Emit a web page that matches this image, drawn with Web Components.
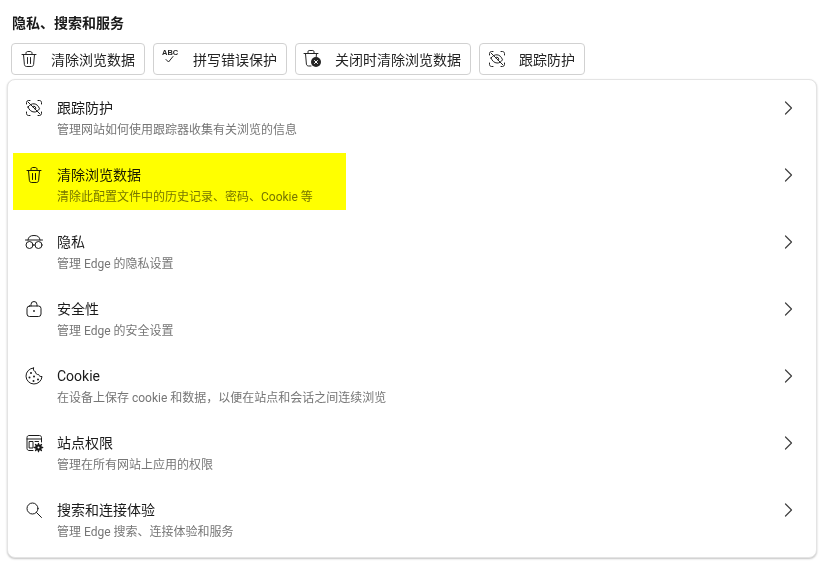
<!DOCTYPE html>
<html lang="zh-CN">
<head>
<meta charset="utf-8">
<title>隐私、搜索和服务</title>
<style>
    html, body { margin: 0; background: #fff; }
    body {
        font-family: Roboto, "Noto Sans CJK SC", sans-serif;
        color: #1a1a1a;
    }
</style>
</head>
<body>
<privacy-page>
    <quick-button icon="trash">清除浏览数据</quick-button>
    <quick-button icon="spell">拼写错误保护</quick-button>
    <quick-button icon="trash-x">关闭时清除浏览数据</quick-button>
    <quick-button icon="track">跟踪防护</quick-button>

    <setting-row slot="rows" icon="track" title="跟踪防护">管理网站如何使用跟踪器收集有关浏览的信息</setting-row>
    <setting-row slot="rows" icon="trash" title="清除浏览数据" marked>清除此配置文件中的历史记录、密码、Cookie 等</setting-row>
    <setting-row slot="rows" icon="glasses" title="隐私">管理 Edge 的隐私设置</setting-row>
    <setting-row slot="rows" icon="lock" title="安全性">管理 Edge 的安全设置</setting-row>
    <setting-row slot="rows" icon="cookie" title="Cookie">在设备上保存 cookie 和数据，以便在站点和会话之间连续浏览</setting-row>
    <setting-row slot="rows" icon="site" title="站点权限">管理在所有网站上应用的权限</setting-row>
    <setting-row slot="rows" icon="search" title="搜索和连接体验">管理 Edge 搜索、连接体验和服务</setting-row>
</privacy-page>

<script>
// icon bodies, all on a 20x20 box
const ICONS = {
    trash: `<path d="M3 5.500h14M7 5.500V4.200c0-1 .7-1.700 1.700-1.700h2.600c1 0 1.700.7 1.700 1.700v1.300M4.500 5.500l.9 10c.1 1.200 1 2 2.200 2h4.800c1.200 0 2.100-.8 2.200-2l.9-10M8.500 8.500v6M11.500 8.500v6"/>`,
    'trash-x': `<path d="M1 4.500h14M5 4.500V2.700c0-.7.5-1.200 1.200-1.200h3.600c.7 0 1.200.5 1.200 1.200v1.800M2.500 4.500l.9 10.500c.1 1.200 1 2 2.200 2h2.400M13.500 4.500l-.3 3.500"/>
        <circle cx="13" cy="13" r="5" fill="currentColor" stroke="none"/>
        <path d="M11.500 11.500l3 3M14.500 11.500l-3 3" stroke="#fff" stroke-width="1"/>`,
    spell: `<text x="1" y="6" font-family="Liberation Sans, sans-serif" font-size="7.500" font-weight="700" fill="currentColor" stroke="none">ABC</text>
        <path d="M5 10.500l2.500 2.500L12 7.500"/>`,
    track: `<path d="M2.500 6v-1.500c0-1.100.9-2 2-2H6M14 2.500h1.500c1.100 0 2 .9 2 2V6M17.500 14v1.500c0 1.100-.9 2-2 2H14M6 17.500H4.500c-1.100 0-2-.9-2-2V14"/>
        <path d="M4 4l12 12"/>
        <path d="M4 9c1.800-2.300 4-3.400 6-3.200 2.500.2 4.500 2 5.500 5-1.500 2.300-3.500 3.400-5.500 3.200-2.800-.2-4.800-2-6-5z"/>
        <path d="M8.600 8.600a2 2 0 0 1 2.800 2.800"/>`,
    glasses: `<path d="M1.500 8h17M4 8c.3-3 2-4.500 6-4.500S15.700 5 16 8"/>
        <circle cx="5.500" cy="13" r="3.500"/><circle cx="14.500" cy="13" r="3.500"/><path d="M9 13h2"/>`,
    lock: `<path d="M7 7V5.500a3 3 0 0 1 6 0V7"/>
        <rect x="3" y="7" width="14" height="10.500" rx="2.500"/>
        <circle cx="10" cy="12" r=".9" fill="currentColor" stroke="none"/>`,
    cookie: `<path d="M9.500 2a8 8 0 1 0 8.500 8.500c-1.600.3-3-.5-3.400-2-1.800.3-3.200-1-3.100-2.800-1.500-.2-2.600-2-2-3.700z"/>
        <g fill="currentColor" stroke="none"><circle cx="7" cy="7" r="1"/><circle cx="5.500" cy="11.500" r="1"/><circle cx="10" cy="10.500" r="1"/><circle cx="9.500" cy="15" r="1"/><circle cx="14" cy="13.500" r="1"/></g>`,
    site: `<path d="M9 17.500H5c-1.100 0-2-.9-2-2v-11c0-1.100.9-2 2-2h10.500c1.100 0 2 .9 2 2V9M3 6h14.500"/>
        <rect x="5.500" y="8.500" width="3.500" height="6.500"/><path d="M11 8.500h3.500"/>
        <circle cx="14.500" cy="14.500" r="3.300" fill="currentColor" stroke="none"/>
        <path d="M14.500 10.300v8.400M10.300 14.500h8.400M11.500 11.500l6 6M17.500 11.500l-6 6" stroke-width="1.300" stroke-dasharray="1.300 5.800"/>
        <circle cx="14.500" cy="14.500" r="1" fill="#fff" stroke="none"/>`,
    search: `<circle cx="8.500" cy="8.500" r="5.500"/><path d="M12.500 12.500l5 5"/>`,
    chevron: `<path d="M7.500 4l6 6-6 6" stroke-width="1.200"/>`
};

function iconMarkup(name) {
    return `<svg viewBox="0 0 20 20" fill="none" stroke="currentColor" stroke-width="1" stroke-linecap="round" stroke-linejoin="round">${ICONS[name]}</svg>`;
}

window.customElements.define('privacy-page',
    class extends HTMLElement {
        constructor() {
            super();
            this.attachShadow({mode: 'open'});
            this.shadowRoot.innerHTML = `
            <style>
            :host {
                display: block;
                padding: 14px 11px 8px 7px;
            }
            h2 {
                margin: 0 0 11px 5px;
                font-size: 14px;
                line-height: 18px;
                font-weight: 700;
                color: #1a1a1a;
            }
            #buttons {
                display: flex;
                gap: 8px;
                margin: 0 0 4px 4px;
            }
            #card {
                display: flex;
                flex-direction: column;
                height: 479px;
                box-sizing: border-box;
                padding: 2px 0 0;
                background: #fff;
                border: 1px solid #e4e4e4;
                border-radius: 8px;
                box-shadow: 0 1px 2px #c4c4c4;
            }
            </style>
            <h2>隐私、搜索和服务</h2>
            <div id="buttons"><slot></slot></div>
            <div id="card"><slot name="rows"></slot></div>`;
        }
    }
);

window.customElements.define('quick-button',
    class extends HTMLElement {
        constructor() {
            super();
            this.attachShadow({mode: 'open'});
            this.shadowRoot.innerHTML = `
            <style>
            :host {
                display: flex;
                align-items: center;
                box-sizing: border-box;
                height: 32px;
                padding: 0 9px 0 7px;
                gap: 12px;
                border: 1px solid #d1d1d1;
                border-radius: 4px;
                font-size: 14px;
                color: #242424;
            }
            svg { width: 20px; height: 20px; flex: none; }
            </style>
            ${iconMarkup(this.getAttribute('icon'))}
            <slot></slot>`;
        }
    }
);

window.customElements.define('setting-row',
    class extends HTMLElement {
        constructor() {
            super();
            this.attachShadow({mode: 'open'});
            const marked = this.hasAttribute('marked') ? '<div id="mark"></div>' : '';
            this.shadowRoot.innerHTML = `
            <style>
            :host {
                display: flex;
                align-items: flex-start;
                position: relative;
                box-sizing: border-box;
                height: 67px;
                padding: 16px 18px 0 16px;
                color: #1a1a1a;
            }
            svg { flex: none; width: 20px; height: 20px; }
            #text { flex: 1; margin-left: 13px; }
            #title { font-size: 14px; line-height: 20px; margin-bottom: 4px; }
            #sub { font-size: 12px; line-height: 16px; color: #767676; }
            #chevron { display: flex; color: #404040; }
            /* highlighter stroke laid on top of the row */
            #mark {
                position: absolute;
                left: 5px;
                top: 4px;
                width: 333px;
                height: 57px;
                background: #ffff00;
                mix-blend-mode: multiply;
            }
            </style>
            ${iconMarkup(this.getAttribute('icon'))}
            <div id="text">
                <div id="title">${this.getAttribute('title')}</div>
                <div id="sub"><slot></slot></div>
            </div>
            <span id="chevron">${iconMarkup('chevron')}</span>
            ${marked}`;
        }
    }
);
</script>
</body>
</html>
